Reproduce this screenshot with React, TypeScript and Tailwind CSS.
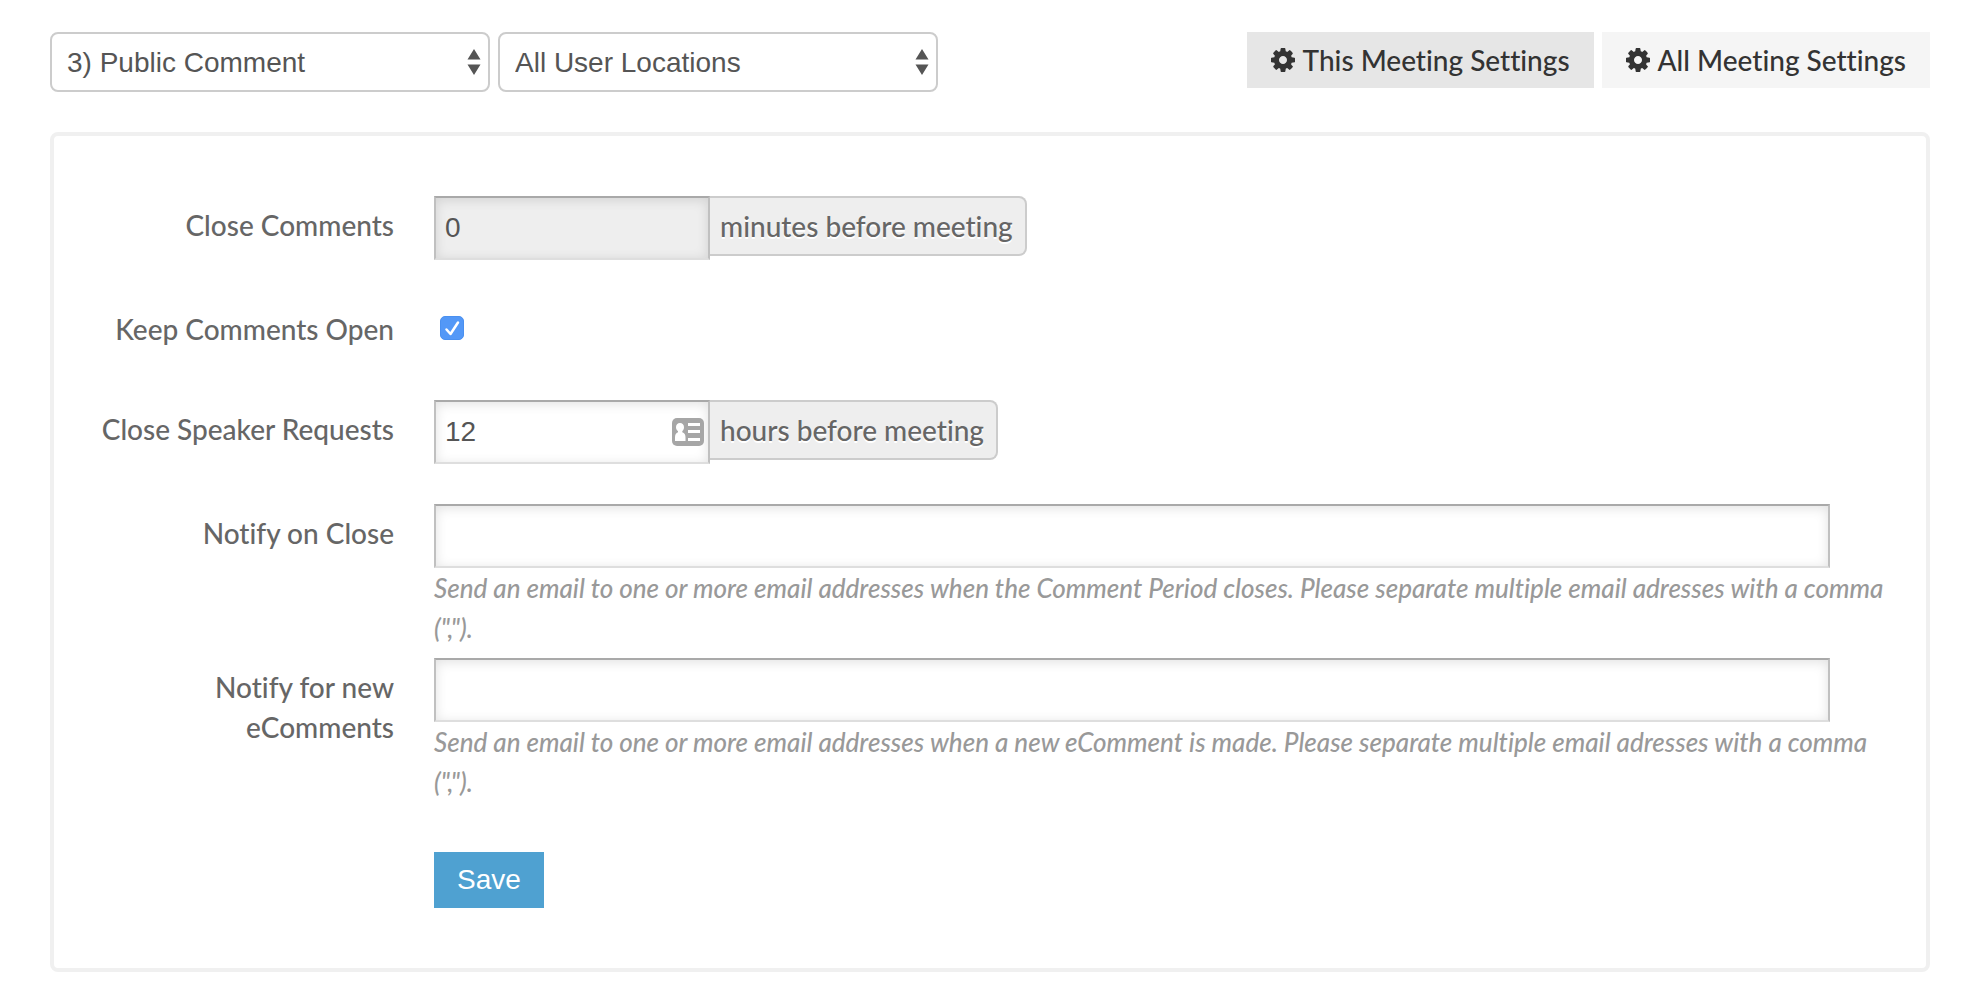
import type { ReactNode } from "react";
import { clsx } from "clsx";

const inputStyles =
  "block h-16 border-2 border-t-[#a9a9a9] border-x-[#c0c0c0] border-b-[#dedede] px-[9px] font-['Liberation_Sans',Arial,sans-serif] text-[28px] text-[#555] shadow-[inset_0_2px_12px_rgba(0,0,0,0.12)] outline-none";

function CogIcon() {
  return (
    <svg viewBox="0 0 1536 1536" className="size-6 fill-current" aria-hidden="true">
      <path d="M1024 768q0-106-75-181t-181-75-181 75-75 181 75 181 181 75 181-75 75-181zm512-109v222q0 12-8 23t-20 13l-185 28q-19 54-39 91 35 50 107 138 10 12 10 25t-9 23q-27 37-99 108t-94 71q-12 0-26-9l-138-108q-44 23-91 38-16 136-29 186-7 28-36 28h-222q-14 0-24.5-8.5t-11.5-21.5l-28-184q-49-16-90-37l-141 107q-10 9-25 9-14 0-25-11-126-114-165-168-7-10-7-23 0-12 8-23 15-21 51-66.5t54-70.5q-27-50-41-99l-183-27q-13-2-21-12.5t-8-23.5v-222q0-12 8-23t19-13l186-28q14-46 39-92-40-57-107-138-10-12-10-24 0-10 9-23 26-36 98.5-107.5t94.5-71.5q13 0 26 10l138 107q44-23 91-38 16-136 29-186 7-28 36-28h222q14 0 24.5 8.5t11.5 21.5l28 184q49 16 90 37l142-107q9-9 24-9 13 0 25 10 129 119 165 170 7 8 7 22 0 12-8 23-15 21-51 66.5t-54 70.5q26 50 41 98l183 28q13 2 21 12.5t8 23.5z" />
    </svg>
  );
}

function ContactIcon() {
  return (
    <svg viewBox="0 0 32 28" className="pointer-events-none absolute top-[18px] right-[6px] h-7 w-8" aria-hidden="true">
      <rect width="32" height="28" rx="5" fill="#a6a6a6" />
      <path d="M8 5c2.500 0 4 1.900 4 4.200 0 1.700-.7 3-1.700 3.900v1.200c2.200.8 3.200 2.300 3.200 5v3.700H3v-3.700c0-2.700 1-4.200 3-5v-1.200C4.800 12.200 4 10.900 4 9.200 4 6.900 5.500 5 8 5z" fill="#fff" />
      <path d="M16 5h12v3H16zM16 12h12v3H16zM16 20h12v3H16z" fill="#fff" />
    </svg>
  );
}

function SelectBox({ label, options }: { label: string; options: string[] }) {
  return (
    <div className="relative w-[440px]">
      <select
        aria-label={label}
        className="h-[60px] w-full appearance-none rounded-lg border-2 border-[#ccc] bg-white px-[15px] pt-[2px] font-['Liberation_Sans',Arial,sans-serif] text-[28px] text-[#555]"
      >
        {options.map((option) => (
          <option key={option}>{option}</option>
        ))}
      </select>
      <svg viewBox="0 0 14 26" className="pointer-events-none absolute top-[17px] right-[9px] h-[26px] w-[14px] fill-[#555]" aria-hidden="true">
        <path d="M7 0l6.500 10.500H.5zM7 26L.5 15.500h13z" />
      </svg>
    </div>
  );
}

function SettingsButton({ active, children }: { active?: boolean; children: ReactNode }) {
  return (
    <button type="button" className={clsx("flex h-14 items-center gap-2 px-6 text-[#333]", active ? "bg-[#e6e6e6]" : "bg-[#f5f5f5]")}>
      <CogIcon />
      {children}
    </button>
  );
}

function AddOn({ children }: { children: ReactNode }) {
  return (
    <span className="flex h-[60px] items-center rounded-r-lg border-2 border-l-0 border-[#ccc] bg-[#eee] pr-3 pl-[10px] [text-shadow:0_2px_0_#fff]">
      {children}
    </span>
  );
}

function FormRow({ id, label, className, children }: { id: string; label: string; className?: string; children: ReactNode }) {
  return (
    <div className={clsx("flex gap-10", className)}>
      <label htmlFor={id} className="w-[300px] shrink-0 pt-[9px] text-right">{label}</label>
      <div className="min-w-0 flex-1">{children}</div>
    </div>
  );
}

function HelpText({ id, children }: { id: string; children: ReactNode }) {
  return <p id={id} className="text-[26px] leading-10 text-[#999] italic">{children}</p>;
}

export default function App() {
  return (
    <main className="pt-8 pr-10 pb-6 pl-[50px] font-[Lato,sans-serif] text-[28px] leading-10 font-medium text-[#666] [font-variant-ligatures:none]">
      <div className="mb-10 flex items-start justify-between">
        <div className="flex gap-2">
          <SelectBox label="Agenda item" options={["3) Public Comment"]} />
          <SelectBox label="User location" options={["All User Locations"]} />
        </div>
        <div className="flex gap-2">
          <SettingsButton active>This Meeting Settings</SettingsButton>
          <SettingsButton>All Meeting Settings</SettingsButton>
        </div>
      </div>

      <form className="rounded-lg border-4 border-[#f0f0f0] pt-[60px] pr-8 pb-[60px] pl-10">
        <FormRow id="close-comments" label="Close Comments" className="mb-10">
          <div className="flex items-start">
            <input id="close-comments" type="text" defaultValue="0" disabled className={clsx(inputStyles, "w-[276px] bg-[#eee]")} />
            <AddOn>minutes before meeting</AddOn>
          </div>
        </FormRow>

        <FormRow id="keep-open" label="Keep Comments Open" className="mb-[51px]">
          <span className="relative mt-4 ml-[6px] block size-6">
            <input id="keep-open" type="checkbox" defaultChecked className="peer block size-6 appearance-none rounded-[5px] border border-[#bbb] bg-white checked:border-[#4a90f0] checked:bg-[#5398f7]" />
            <svg viewBox="0 0 24 24" className="pointer-events-none absolute inset-0 hidden size-6 peer-checked:block" fill="none" aria-hidden="true">
              <path d="M6.500 13.500l4 4.500L18 6.500" stroke="#fff" strokeWidth="2.500" strokeLinecap="round" strokeLinejoin="round" />
            </svg>
          </span>
        </FormRow>

        <FormRow id="close-requests" label="Close Speaker Requests" className="mb-10">
          <div className="flex items-start">
            <div className="relative">
              <input id="close-requests" type="text" defaultValue="12" className={clsx(inputStyles, "w-[276px] bg-white")} />
              <ContactIcon />
            </div>
            <AddOn>hours before meeting</AddOn>
          </div>
        </FormRow>

        <FormRow id="notify-close" label="Notify on Close" className="mb-[10px]">
          <div className="pr-16">
            <input id="notify-close" type="text" aria-describedby="notify-close-help" className={clsx(inputStyles, "w-full bg-white")} />
          </div>
          <HelpText id="notify-close-help">
            Send an email to one or more email addresses when the Comment Period closes. Please separate multiple email adresses with a comma (",").
          </HelpText>
        </FormRow>

        <FormRow id="notify-new" label="Notify for new eComments" className="mb-[50px]">
          <div className="pr-16">
            <input id="notify-new" type="text" aria-describedby="notify-new-help" className={clsx(inputStyles, "w-full bg-white")} />
          </div>
          <HelpText id="notify-new-help">
            Send an email to one or more email addresses when a new eComment is made. Please separate multiple email adresses with a comma (",").
          </HelpText>
        </FormRow>

        <button type="submit" className="ml-[340px] block h-14 bg-[#4fa1d1] px-[23px] font-['Liberation_Sans',Arial,sans-serif] text-white">
          Save
        </button>
      </form>
    </main>
  );
}
